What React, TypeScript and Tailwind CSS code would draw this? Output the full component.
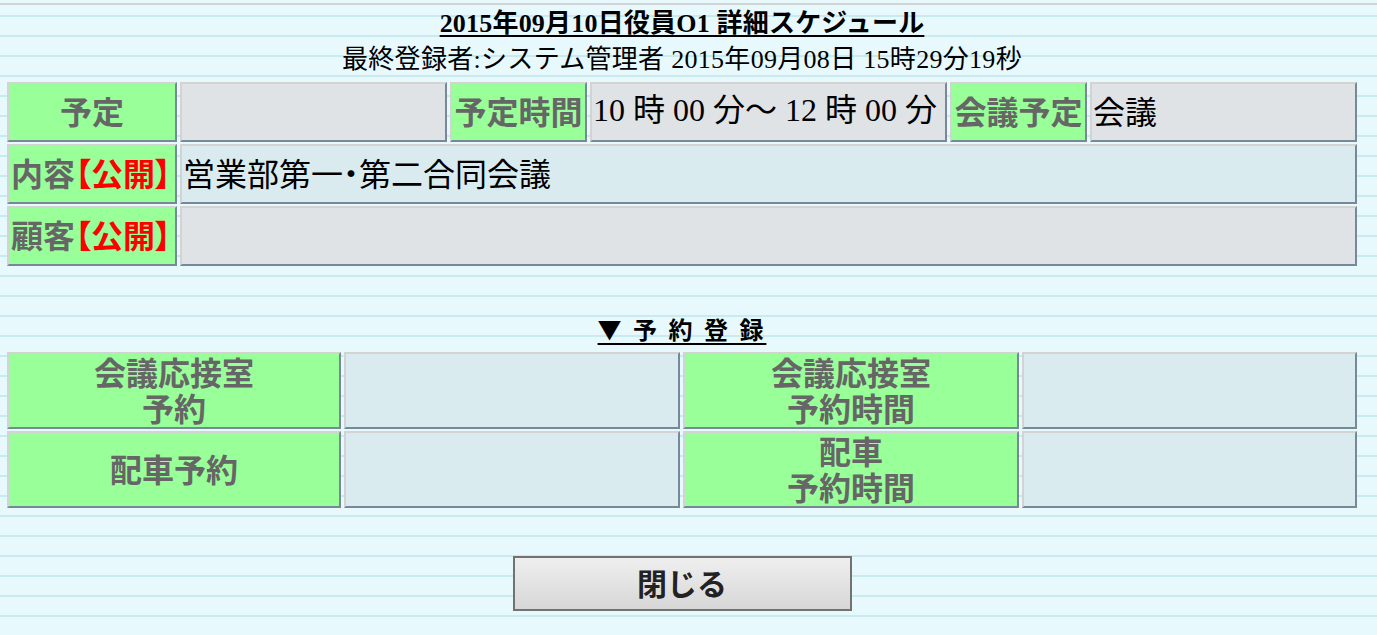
import React from "react";

const bd =
  "border-2 border-t-[#d3d3d3] border-l-[#d3d3d3] border-r-[#778899] border-b-[#778899]";
const label = `${bd} bg-[#99ff99] text-[#666666] font-bold text-[32px] flex items-center justify-center text-center whitespace-nowrap`;
const valGray = `${bd} bg-[#dfe3e6] text-black text-[32px] flex items-center pl-[1px] whitespace-nowrap`;
const valBlue = `${bd} bg-[#d9ebee] text-black text-[32px] flex items-center pl-[1px] whitespace-nowrap`;

function Pub() {
  return <span className="text-[#ff0000] [font-feature-settings:'palt']">【公開】</span>;
}

export default function App() {
  return (
    <div
      className="w-full h-[635px] overflow-hidden bg-[image:repeating-linear-gradient(180deg,#e7f9fd_0px,#e7f9fd_15px,#c8ebf0_15px,#c8ebf0_17px,#e7f9fd_17px,#e7f9fd_20px)]"
      style={{ fontFamily: '"Liberation Serif", "Noto Sans CJK JP", serif' }}
    >
      <div className="h-[3px]" />
      <div className="h-[2px] bg-[#d4d4d4]" />
      <div className="w-[1364px] px-[7px]">
        <div className="mt-[4px] h-[30px] leading-[30px] text-center text-[26px] font-bold text-black underline underline-offset-[3px] decoration-[2px] tracking-[0.2px]">
          2015年09月10日役員O1 詳細スケジュール
        </div>
        <div className="mt-[6px] h-[30px] leading-[30px] text-center text-[26px] text-black tracking-[0.3px]">
          最終登録者:システム管理者 2015年09月08日 15時29分19秒
        </div>

        <div
          className="mt-[7px] grid grid-cols-[170px_267px_137px_357px_137px_267px] auto-rows-[60px] gap-x-[3px] gap-y-[2px]"
          style={{ fontFamily: '"Noto Sans CJK JP", sans-serif' }}
        >
          <div className={`${label} pb-[5px]`}>予定</div>
          <div className={valGray}></div>
          <div className={`${label} pb-[5px]`}>予定時間</div>
          <div className={`${valGray} pb-[5px]`}>
            <span style={{ fontFamily: '"Liberation Serif", "Noto Sans CJK JP", serif' }}>
              10 時 00 分～ 12 時 00 分
            </span>
          </div>
          <div className={`${label} pb-[5px]`}>会議予定</div>
          <div className={`${valGray} pb-[5px]`}>会議</div>

          <div className={`${label} justify-start pl-[2px] pb-[5px]`}>
            内容
            <Pub />
          </div>
          <div className={`${valBlue} col-span-5 pb-[5px]`}>
            営業部第一<span className="[font-feature-settings:'palt']">・</span>第二合同会議
          </div>

          <div className={`${label} justify-start pl-[2px] pb-[5px]`}>
            顧客
            <Pub />
          </div>
          <div className={`${valGray} col-span-5`}></div>
        </div>

        <div
          className="mt-[48px] h-[30px] leading-[30px] text-center text-[24px] font-bold text-black"
          style={{ fontFamily: '"Noto Sans CJK JP", sans-serif' }}
        >
          <span className="underline underline-offset-[4px] decoration-[2px] tracking-[3px]">▼ 予 約 登 録</span>
        </div>

        <div
          className="mt-[8px] grid grid-cols-[334px_336px_336px_335px] auto-rows-[77px] gap-x-[3px] gap-y-[2px]"
          style={{ fontFamily: '"Noto Sans CJK JP", sans-serif' }}
        >
          <div className={`${label} leading-[36px] pb-[3px]`}>
            会議応接室
            <br />
            予約
          </div>
          <div className={valBlue}></div>
          <div className={`${label} leading-[36px] pb-[3px]`}>
            会議応接室
            <br />
            予約時間
          </div>
          <div className={valBlue}></div>

          <div className={`${label} leading-[36px] pb-[3px]`}>配車予約</div>
          <div className={valBlue}></div>
          <div className={`${label} leading-[36px] pb-[3px]`}>
            配車
            <br />
            予約時間
          </div>
          <div className={valBlue}></div>
        </div>

        <div className="mt-[48px] flex justify-center">
          <button
            className="w-[339px] h-[55px] border-2 border-[#727272] bg-linear-to-b from-[#efefef] to-[#d7d7d7] text-[30px] font-bold text-[#222222] flex items-center justify-center pb-[3px]"
            style={{ fontFamily: '"Noto Sans CJK JP", sans-serif' }}
          >
            閉じる
          </button>
        </div>
      </div>
    </div>
  );
}
